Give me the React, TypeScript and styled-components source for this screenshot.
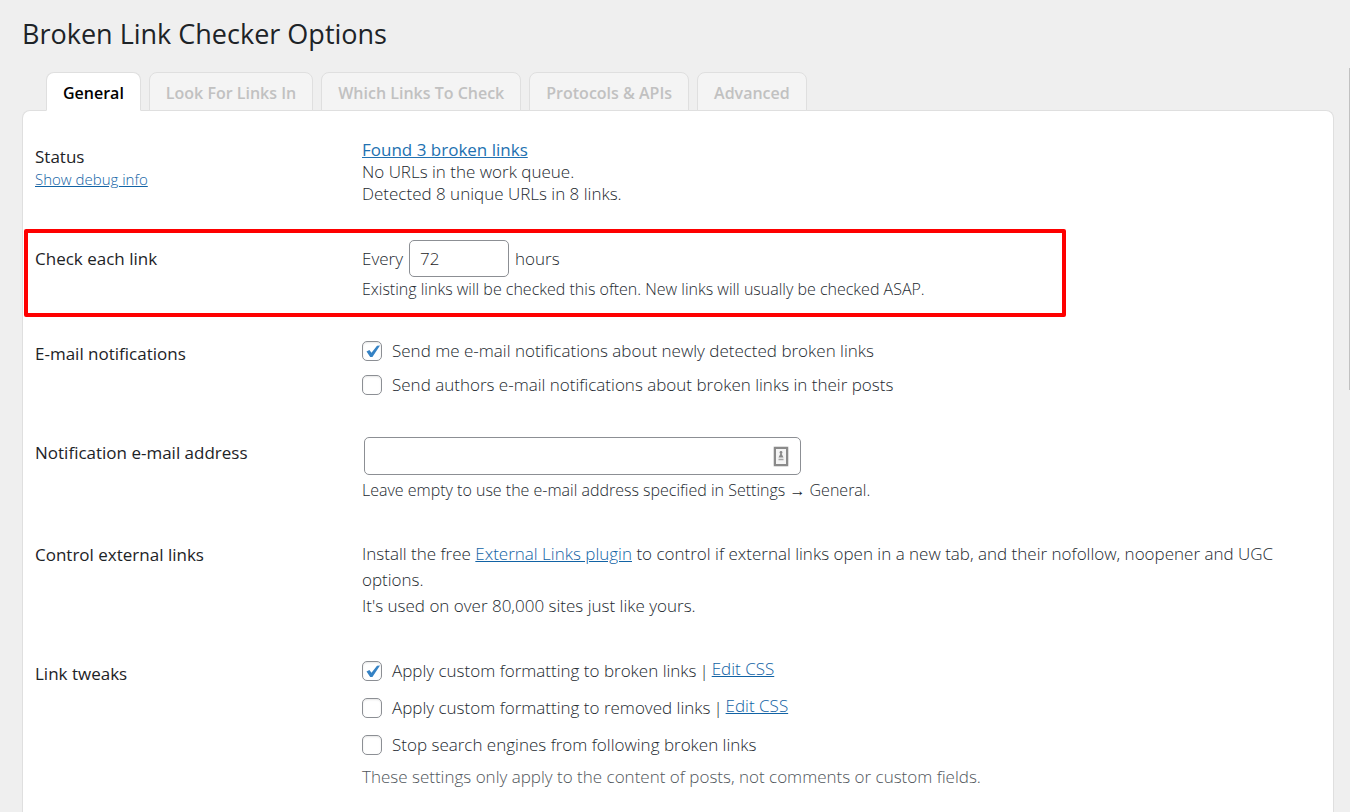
import React, { useState } from "react";
import styled, { createGlobalStyle } from "styled-components";

const GlobalStyle = createGlobalStyle`
  *, *::before, *::after { box-sizing: border-box; }
  body {
    margin: 0;
    background: #efefef;
    color: #23292f;
    font-family: "Open Sans", "Noto Sans", sans-serif;
    font-size: 17px;
    font-weight: 300;
    line-height: 22px;
  }
`;

const Page = styled.div`
  display: flex;
  flex-direction: column;
  min-height: 100vh;
  padding: 18px 16px 0 22px;
`;

const ScrollThumb = styled.div`
  position: fixed;
  top: 68px;
  right: 0;
  width: 1px;
  height: 322px;
  background: #c1c1c1;
`;

const Title = styled.h1`
  margin: 0 0 22px;
  color: #1d2327;
  font-size: 27px;
  font-weight: 400;
  line-height: 32px;
`;

const Tabs = styled.nav`
  display: flex;
  gap: 8px;
  padding-left: 24px;
`;

const Tab = styled.button<{ $active: boolean }>`
  position: relative;
  height: 39px;
  margin-bottom: -1px;
  padding: 2px 16px 0;
  border: 1px solid #dfdfdf;
  border-bottom-color: ${(p) => (p.$active ? "#fff" : "#dfdfdf")};
  border-radius: 8px 8px 0 0;
  background: ${(p) => (p.$active ? "#fff" : "#f4f4f4")};
  color: ${(p) => (p.$active ? "#000" : "#c1c1c1")};
  font: inherit;
  font-size: 16px;
  font-weight: 600;
  white-space: nowrap;
  cursor: pointer;
`;

const Panel = styled.form`
  flex: 1;
  padding: 9px 12px 0;
  border: 1px solid #dfdfdf;
  border-bottom: 0;
  border-radius: 8px 8px 0 0;
  background: #fff;
`;

const Row = styled.section`
  position: relative;
  display: grid;
  grid-template-columns: 327px 1fr;
  padding-bottom: 15px;
`;

const Highlight = styled.div`
  position: absolute;
  top: 7px;
  left: -11px;
  width: 1042px;
  max-width: 100%;
  height: 88px;
  border: 4px solid #fe0000;
  border-radius: 2px;
  pointer-events: none;
`;

const Heading = styled.div`
  padding-top: 26px;
`;

const Label = styled.h2`
  margin: 0;
  color: #1d2327;
  font-size: 17px;
  font-weight: 500;
  line-height: 22px;
`;

const Content = styled.div`
  padding-top: 18px;
`;

const Link = styled.a<{ $strong?: boolean; $small?: boolean }>`
  color: ${(p) => (p.$strong ? "#2271b1" : "#1263a5")};
  font-size: ${(p) => (p.$small ? "15px" : "inherit")};
  font-weight: ${(p) => (p.$strong ? 500 : "inherit")};
  text-decoration: underline;
`;

const StatusText = styled.div`
  padding: 1px 0 2px;
`;

const InlineField = styled.label`
  display: flex;
  align-items: center;
  gap: 6px;
`;

const HoursInput = styled.input`
  width: 100px;
  height: 37px;
  padding: 0 10px;
  border: 1px solid #8c8f94;
  border-radius: 5px;
  background: #fff;
  color: #1d2327;
  font: inherit;
`;

const Hint = styled.p`
  margin: 0 0 1px;
  font-size: 16px;
  line-height: 24px;
`;

const Note = styled.p`
  margin: 3px 0 0;
  color: #50565b;
  line-height: 26px;
`;

const Paragraph = styled.p`
  margin: 5px 0 3px;
  line-height: 26px;
`;

const EmailField = styled.div`
  position: relative;
  width: 437px;
  margin: 3px 0 3px 2px;
`;

const EmailInput = styled.input`
  display: block;
  width: 100%;
  height: 38px;
  padding: 0 40px 0 10px;
  border: 1px solid #8c8f94;
  border-radius: 5px;
  background: #fff;
  color: #2c3338;
  font: inherit;
`;

const AutofillIcon = styled.svg`
  position: absolute;
  top: 9px;
  right: 11px;
  width: 18px;
  height: 21px;
`;

const Checks = styled.div<{ $gap: number }>`
  display: flex;
  flex-direction: column;
  gap: ${(p) => p.$gap}px;
`;

const CheckLine = styled.div`
  display: flex;
  align-items: center;
  gap: 3px;
  height: 32px;
`;

const CheckLabel = styled.label`
  display: flex;
  align-items: center;
  gap: 10px;
`;

const CheckBoxWrap = styled.span`
  position: relative;
  display: flex;
  width: 20px;
  height: 20px;
`;

const CheckInput = styled.input`
  appearance: none;
  width: 20px;
  height: 20px;
  margin: 0;
  border: 1px solid #8c8f94;
  border-radius: 5px;
  background: #fff;
  box-shadow: inset 0 1px 2px rgba(0, 0, 0, 0.1);
`;

const Tick = styled.svg`
  position: absolute;
  inset: 0;
  pointer-events: none;
`;

const Raised = styled.span`
  padding-bottom: 4px;
`;

type CheckProps = { label: string; initial?: boolean; cssLink?: boolean };

function Check({ label, initial = false, cssLink = false }: CheckProps) {
  const [on, setOn] = useState(initial);
  return (
    <CheckLine>
      <CheckLabel>
        <CheckBoxWrap>
          <CheckInput type="checkbox" checked={on} onChange={() => setOn(!on)} />
          {on && (
            <Tick width="20" height="20" viewBox="0 0 20 20" aria-hidden="true">
              <path d="M4.5 10.4 7.4 9 9.5 11.8 15 4.8 18 4.6 10.4 16 8.2 16Z" fill="#3582c4" />
            </Tick>
          )}
        </CheckBoxWrap>
        {label}
      </CheckLabel>
      {cssLink && (
        <>
          <span>|</span>
          <Raised>
            <Link href="#css">Edit CSS</Link>
          </Raised>
        </>
      )}
    </CheckLine>
  );
}

const tabs = ["General", "Look For Links In", "Which Links To Check", "Protocols & APIs", "Advanced"];

export default function App() {
  const [active, setActive] = useState(tabs[0]);
  return (
    <>
      <GlobalStyle />
      <Page>
        <Title>Broken Link Checker Options</Title>
        <Tabs>
          {tabs.map((t) => (
            <Tab key={t} type="button" $active={t === active} onClick={() => setActive(t)}>
              {t}
            </Tab>
          ))}
        </Tabs>
        <Panel>
          <Row>
            <Heading>
              <Label>Status</Label>
              <Link href="#debug" $small>Show debug info</Link>
            </Heading>
            <Content>
              <StatusText>
                <Link href="#broken" $strong>Found 3 broken links</Link>
                <br />
                No URLs in the work queue.
                <br />
                Detected 8 unique URLs in 8 links.
              </StatusText>
            </Content>
          </Row>
          <Row>
            <Heading>
              <Label>Check each link</Label>
            </Heading>
            <Content>
              <InlineField>
                Every
                <HoursInput type="text" defaultValue="72" />
                hours
              </InlineField>
              <Hint>Existing links will be checked this often. New links will usually be checked ASAP.</Hint>
            </Content>
            <Highlight />
          </Row>
          <Row>
            <Heading>
              <Label>E-mail notifications</Label>
            </Heading>
            <Content>
              <Checks $gap={2}>
                <Check label="Send me e-mail notifications about newly detected broken links" initial />
                <Check label="Send authors e-mail notifications about broken links in their posts" />
              </Checks>
            </Content>
          </Row>
          <Row>
            <Heading>
              <Label as="label" htmlFor="email">Notification e-mail address</Label>
            </Heading>
            <Content>
              <EmailField>
                <EmailInput id="email" type="email" />
                <AutofillIcon viewBox="0 0 18 21" aria-hidden="true">
                  <rect x="1" y="0" width="16" height="21" rx="2" fill="#dedede" />
                  <rect x="3" y="2" width="12" height="17" fill="#f4f4f4" stroke="#8a8a8a" strokeWidth="2" />
                  <circle cx="9" cy="6.5" r="1.4" fill="#8a8a8a" />
                  <path d="M9 6.5 11.5 11.5H6.5Z" fill="#8a8a8a" />
                  <path d="M6.5 13.5H11.5" stroke="#a5a5a5" strokeWidth="1.5" />
                </AutofillIcon>
              </EmailField>
              <Hint>Leave empty to use the e-mail address specified in Settings → General.</Hint>
            </Content>
          </Row>
          <Row>
            <Heading>
              <Label>Control external links</Label>
            </Heading>
            <Content>
              <Paragraph>
                Install the free <Link href="#plugin">External Links plugin</Link> to control if external links open in a
                new tab, and their nofollow, noopener and UGC options.
                <br />
                It's used on over 80,000 sites just like yours.
              </Paragraph>
            </Content>
          </Row>
          <Row>
            <Heading>
              <Label>Link tweaks</Label>
            </Heading>
            <Content>
              <Checks $gap={5}>
                <Check label="Apply custom formatting to broken links" initial cssLink />
                <Check label="Apply custom formatting to removed links" cssLink />
                <Check label="Stop search engines from following broken links" />
              </Checks>
              <Note>These settings only apply to the content of posts, not comments or custom fields.</Note>
            </Content>
          </Row>
        </Panel>
      </Page>
      <ScrollThumb />
    </>
  );
}
